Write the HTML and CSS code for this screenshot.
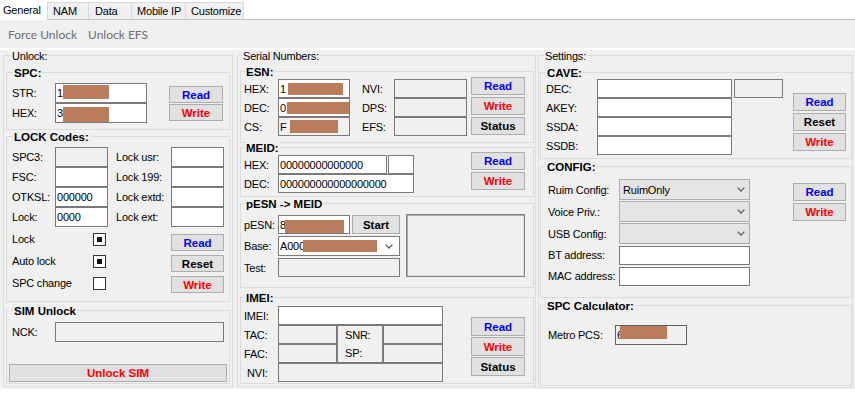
FILE: index.html
```html
<!DOCTYPE html>
<html lang="en">
<head>
    <meta charset="UTF-8">
    <title>General</title>
    <link rel="stylesheet" href="styles.css">
</head>
<body>
    <div class="tabs">
        <div class="tab on">General</div>
        <div class="tab t-nam">NAM</div>
        <div class="tab t-data">Data</div>
        <div class="tab t-mip">Mobile IP</div>
        <div class="tab t-cust">Customize</div>
    </div>
    <div class="menu"><span class="mi">Force Unlock</span><span class="mi">Unlock EFS</span></div>

    <div class="page">
        <!-- left column -->
        <div class="grp col col-left">
            <div class="cap c-unlock">Unlock:</div>

            <div class="grp g-spc">
                <div class="cap b">SPC:</div>
                <div class="body">
                    <div class="form f-spc">
                        <div class="lbl">STR:</div><div class="tb">1<span class="rd rd-str"></span></div>
                        <div class="lbl">HEX:</div><div class="tb">3<span class="rd rd-hex"></span></div>
                    </div>
                    <div class="btns b-spc"><div class="btn blue">Read</div><div class="btn red">Write</div></div>
                </div>
            </div>

            <div class="grp g-lock">
                <div class="cap b">LOCK Codes:</div>
                <div class="form f-lock">
                    <div class="lbl">SPC3:</div><div class="tb off"></div>
                    <div class="lbl in">Lock usr:</div><div class="tb"></div>
                    <div class="lbl">FSC:</div><div class="tb"></div>
                    <div class="lbl in">Lock 199:</div><div class="tb"></div>
                    <div class="lbl">OTKSL:</div><div class="tb">000000</div>
                    <div class="lbl in">Lock extd:</div><div class="tb"></div>
                    <div class="lbl">Lock:</div><div class="tb">0000</div>
                    <div class="lbl in">Lock ext:</div><div class="tb"></div>
                </div>
                <div class="lock-bottom">
                    <div class="checks">
                        <div class="lbl">Lock</div><div class="cb on"></div>
                        <div class="lbl">Auto lock</div><div class="cb on"></div>
                        <div class="lbl">SPC change</div><div class="cb"></div>
                    </div>
                    <div class="btns b-lock">
                        <div class="btn blue">Read</div>
                        <div class="btn">Reset</div>
                        <div class="btn red">Write</div>
                    </div>
                </div>
            </div>

            <div class="grp g-sim">
                <div class="cap b">SIM Unlock</div>
                <div class="form f-sim">
                    <div class="lbl">NCK:</div><div class="tb off"></div>
                </div>
                <div class="btn sim-btn">Unlock SIM</div>
            </div>
        </div>

        <!-- middle column -->
        <div class="grp col col-mid">
            <div class="cap c-serial">Serial Numbers:</div>

            <div class="grp g-esn">
                <div class="cap b">ESN:</div>
                <div class="body">
                    <div class="form f-esn">
                        <div class="lbl">HEX:</div><div class="tb">1<span class="rd rd-esnhex"></span></div>
                        <div class="lbl in12">NVI:</div><div class="tb off"></div>
                        <div class="lbl">DEC:</div><div class="tb">0<span class="rd rd-esndec"></span></div>
                        <div class="lbl in12">DPS:</div><div class="tb off"></div>
                        <div class="lbl">CS:</div><div class="tb off">F<span class="rd rd-cs"></span></div>
                        <div class="lbl in12">EFS:</div><div class="tb off"></div>
                    </div>
                    <div class="btns b-esn">
                        <div class="btn blue">Read</div>
                        <div class="btn red">Write</div>
                        <div class="btn">Status</div>
                    </div>
                </div>
            </div>

            <div class="grp g-meid">
                <div class="cap b">MEID:</div>
                <div class="body">
                    <div class="form f-meid">
                        <div class="lbl">HEX:</div><div class="tb">00000000000000</div><div></div><div class="tb"></div>
                        <div class="lbl">DEC:</div><div class="tb span3">000000000000000000</div>
                    </div>
                    <div class="btns b-meid">
                        <div class="btn blue">Read</div>
                        <div class="btn red">Write</div>
                    </div>
                </div>
            </div>

            <div class="grp g-pesn">
                <div class="cap b">pESN -&gt; MEID</div>
                <div class="body">
                    <div class="form f-pesn">
                        <div class="lbl">pESN:</div><div class="tb">8<span class="rd rd-pesn"></span></div><div></div><div class="btn">Start</div>
                        <div class="lbl">Base:</div>
                        <div class="combo span3">
                            <span>A000<span class="rd rd-base"></span></span>
                            <svg class="chev" width="8" height="5" viewBox="0 0 8 5"><path d="M0.6 0.6 L4 4 L7.4 0.6" fill="none" stroke="#5a5a5a" stroke-width="1.3"/></svg>
                        </div>
                        <div class="lbl">Test:</div><div class="tb off span3"></div>
                    </div>
                    <div class="pic"></div>
                </div>
            </div>

            <div class="grp g-imei">
                <div class="cap b">IMEI:</div>
                <div class="body">
                    <div class="form f-imei">
                        <div class="lbl">IMEI:</div><div class="tb span3"></div>
                        <div class="lbl">TAC:</div><div class="tb off"></div>
                        <div class="snr"><span>SNR:</span><span>SP:</span></div>
                        <div class="tb off"></div>
                        <div class="lbl">FAC:</div><div class="tb off"></div><div class="tb off"></div>
                        <div class="lbl in3">NVI:</div><div class="tb off span3"></div>
                    </div>
                    <div class="btns b-imei">
                        <div class="btn blue">Read</div>
                        <div class="btn red">Write</div>
                        <div class="btn">Status</div>
                    </div>
                </div>
            </div>
        </div>

        <!-- right column -->
        <div class="grp col col-right">
            <div class="cap c-settings">Settings:</div>

            <div class="grp g-cave">
                <div class="cap b">CAVE:</div>
                <div class="body">
                    <div class="form f-cave">
                        <div class="lbl">DEC:</div><div class="tb"></div><div></div><div class="tb off"></div>
                        <div class="lbl">AKEY:</div><div class="tb"></div>
                        <div class="lbl">SSDA:</div><div class="tb"></div>
                        <div class="lbl">SSDB:</div><div class="tb"></div>
                    </div>
                    <div class="btns b-cave">
                        <div class="btn blue">Read</div>
                        <div class="btn">Reset</div>
                        <div class="btn red">Write</div>
                    </div>
                </div>
            </div>

            <div class="grp g-config">
                <div class="cap b">CONFIG:</div>
                <div class="body">
                    <div class="form f-config">
                        <div class="lbl">Ruim Config:</div>
                        <div class="sel"><span>RuimOnly</span><svg class="chev" width="8" height="5" viewBox="0 0 8 5"><path d="M0.6 0.6 L4 4 L7.4 0.6" fill="none" stroke="#5a5a5a" stroke-width="1.3"/></svg></div>
                        <div class="lbl">Voice Priv.:</div>
                        <div class="sel"><span></span><svg class="chev" width="8" height="5" viewBox="0 0 8 5"><path d="M0.6 0.6 L4 4 L7.4 0.6" fill="none" stroke="#5a5a5a" stroke-width="1.3"/></svg></div>
                        <div class="lbl">USB Config:</div>
                        <div class="sel"><span></span><svg class="chev" width="8" height="5" viewBox="0 0 8 5"><path d="M0.6 0.6 L4 4 L7.4 0.6" fill="none" stroke="#5a5a5a" stroke-width="1.3"/></svg></div>
                        <div class="lbl">BT address:</div><div class="tb low"></div>
                        <div class="lbl">MAC address:</div><div class="tb low"></div>
                    </div>
                    <div class="btns b-config">
                        <div class="btn blue">Read</div>
                        <div class="btn red">Write</div>
                    </div>
                </div>
            </div>

            <div class="grp g-calc">
                <div class="cap b">SPC Calculator:</div>
                <div class="body">
                    <div class="form f-calc">
                        <div class="lbl">Metro PCS:</div><div class="tb dark">6<span class="rd rd-metro"></span></div>
                    </div>
                </div>
            </div>
        </div>
    </div>
</body>
</html>
```

FILE: styles.css
```css
*{box-sizing:border-box;}
body{
    margin:0;
    width:855px;
    height:394px;
    overflow:hidden;
    background:#fff;
    font-family:"Liberation Sans",Arial,sans-serif;
    font-size:11px;
    letter-spacing:-0.2px;
    color:#000;
}

/* tab strip */
.tabs{display:flex;align-items:flex-end;height:20px;border-bottom:1px solid #c3c3c3;}
.tab{
    height:17px;
    line-height:16px;
    padding-left:5px;
    border:1px solid #d9d9d9;
    border-right:0;
    border-bottom:0;
    background:#f0f0f0;
    white-space:nowrap;
}
.tab.on{width:47px;height:20px;margin-bottom:-1px;padding:2px 0 0 3px;border:0;background:#fff;}
.t-nam{width:41px;}
.t-data{width:43px;padding-left:6px;}
.t-mip{width:54px;}
.t-cust{width:59px;border-right:1px solid #d9d9d9;}

/* disabled menu */
.menu{
    display:flex;
    height:30px;
    padding:8px 0 0 8px;
    background:#f0f0f0;
    border-bottom:2px solid #fff;
    font-family:Lato,"Open Sans",sans-serif;
    font-size:12px;
    line-height:14px;
    letter-spacing:0;
    color:#6d6d6d;
}
.mi+.mi{margin-left:11px;}

/* page + group boxes */
.page{display:flex;align-items:flex-start;height:339px;background:#f0f0f0;}
.grp{border:1px solid #dcdcdc;}
.cap{
    width:fit-content;
    height:12px;
    line-height:12px;
    margin-top:-6px;
    padding:0 1px;
    background:#f0f0f0;
    white-space:nowrap;
}
.cap.b{font-weight:bold;font-size:11.5px;letter-spacing:0;}
.col{margin-top:5px;}
.col-left{width:230px;height:332px;margin-left:3px;}
.col-mid{width:299px;height:332px;margin-left:4px;}
.col-right{width:315px;height:333px;margin-left:2px;}

/* controls */
.body{display:flex;align-items:flex-start;}
.form{display:grid;}
.lbl{display:flex;align-items:center;white-space:nowrap;}
.lbl.in{padding-left:8px;}
.lbl.in12{padding-left:12px;}
.lbl.in3{padding-left:3px;}
.tb{
    display:flex;
    align-items:center;
    overflow:hidden;
    white-space:nowrap;
    padding-left:1px;
    border:1px solid #7a7a7a;
    background:#fff;
}
.tb.off{background:#f0f0f0;}
.tb.dark{border-color:#5f5f5f;background:#f0f0f0;}
.span3{grid-column:span 3;}
.btns{display:flex;flex-direction:column;}
.btn{
    display:flex;
    align-items:center;
    justify-content:center;
    height:18px;
    border:1px solid #adadad;
    background:#e1e1e1;
    font-weight:bold;
    font-size:11.5px;
    letter-spacing:0;
    white-space:nowrap;
}
.blue{color:#0000ff;}
.red{color:#ff0000;}
.cb{
    display:flex;
    align-items:center;
    justify-content:center;
    width:13px;
    height:13px;
    border:1px solid #333;
    background:#fff;
}
.cb.on::after{content:"";width:5px;height:5px;background:#111;}
.sel{
    display:flex;
    align-items:center;
    justify-content:space-between;
    padding:0 4px 0 3px;
    border:1px solid #acacac;
    background:#e5e5e5;
}
.combo{
    display:flex;
    align-items:center;
    justify-content:space-between;
    padding:0 6px 0 1px;
    border:1px solid #7a7a7a;
    background:#fff;
    white-space:nowrap;
}
.combo>span{display:flex;align-items:center;}
.chev{flex:none;}

/* redacted values */
.rd{display:inline-block;flex:none;background:#ba7d5c;}
.rd-str{width:46px;height:14px;margin-bottom:2px;}
.rd-hex{width:46px;height:15px;margin-top:3px;}
.rd-esnhex{width:55px;height:12px;margin-left:2px;}
.rd-esndec{width:62px;height:12px;margin-left:1px;}
.rd-cs{width:48px;height:13px;margin-left:3px;}
.rd-pesn{width:59px;height:14px;margin:4px 0 0 -1px;}
.rd-base{width:74px;height:12px;margin-left:-2px;}
.rd-metro{width:47px;height:14px;margin:0 0 6px -3px;}

/* left column */
.c-unlock{margin-left:7px;}
.col-left .grp{margin-left:2px;margin-right:2px;}
.col-left .grp .cap{margin-left:6px;}
.g-spc{margin-top:10px;height:58px;}
.g-spc .body{padding:4px 0 0 5px;}
.f-spc{grid-template-columns:43px 92px;grid-auto-rows:20px;}
.b-spc{width:54px;margin:3px 0 0 22px;gap:1px;}
.b-spc .btn{height:17px;}

.g-lock{margin-top:6px;height:166px;}
.f-lock{padding:4px 0 0 5px;grid-template-columns:43px 53px 63px 53px;grid-auto-rows:20px;}
.lock-bottom{display:flex;align-items:flex-start;margin-top:1px;padding-left:5px;}
.checks{display:grid;grid-template-columns:81px 13px;grid-auto-rows:22px;align-items:center;}
.b-lock{width:53px;margin:6px 0 0 65px;gap:4px;}
.b-lock .btn{height:17px;}

.g-sim{margin-top:8px;height:74px;}
.f-sim{padding:5px 0 0 5px;grid-template-columns:43px 169px;grid-auto-rows:20px;}
.sim-btn{width:218px;margin:22px 0 0 2px;color:#f00;}

/* middle column */
.c-serial{margin-left:4px;}
.col-mid .grp{width:294px;margin-left:2px;}
.col-mid .grp .cap{margin-left:4px;}
.col-mid .body{padding-left:3px;}
.g-esn{margin-top:9px;height:72px;}
.f-esn{margin-top:1px;grid-template-columns:34px 72px 44px 73px;grid-auto-rows:19px;}
.b-esn{width:54px;margin:-1px 0 0 4px;gap:2px;}

.g-meid{margin-top:4px;height:50px;}
.f-meid{margin-top:1px;grid-template-columns:34px 109px 1px 26px;grid-auto-rows:19px;}
.b-meid{width:54px;margin:-2px 0 0 57px;gap:2px;}

.g-pesn{margin-top:6px;height:85px;}
.f-pesn{margin-top:5px;grid-template-columns:34px 72px 2px 48px;grid-template-rows:19px 20px 19px;row-gap:2px;}
.f-pesn .btn{height:19px;}
.pic{
    width:119px;
    height:63px;
    margin:4px 0 0 6px;
    border:1px solid #828282;
    box-shadow:inset 1px 1px 0 #a9a9a9, inset -1px -1px 0 #dadada;
}

.g-imei{margin-top:9px;height:87px;}
.f-imei{margin-top:2px;grid-template-columns:34px 59px 46px 60px;grid-auto-rows:19px;}
.snr{
    display:grid;
    grid-row:span 2;
    grid-template-rows:1fr 1fr;
    align-items:center;
    padding-left:7px;
    border:1px solid #7a7a7a;
    background:#f0f0f0;
}
.b-imei{width:54px;margin:13px 0 0 28px;gap:1px;}
.b-imei .btn{height:19px;}

/* right column */
.c-settings{margin-left:5px;}
.col-right .grp{width:312px;margin-left:1px;}
.col-right .grp .cap{margin-left:5px;}
.g-cave{margin-top:10px;height:87px;}
.g-cave .body{padding-left:5px;}
.f-cave{grid-template-columns:51px 135px 2px 49px;grid-auto-rows:19px;}
.f-cave .lbl{grid-column:1;}
.b-cave{width:53px;margin:14px 0 0 10px;gap:2px;}

.g-config{margin-top:7px;height:132px;}
.g-config .body{padding-left:7px;}
.f-config{margin-top:6px;grid-template-columns:71px 131px;grid-template-rows:21px 21px 21px 20px 20px;row-gap:1px;}
.tb.low{height:19px;align-self:end;}
.b-config{width:53px;margin:10px 0 0 43px;gap:2px;}

.g-calc{margin-top:7px;height:81px;}
.g-calc .body{padding:13px 0 0 7px;}
.f-calc{grid-template-columns:67px 72px;grid-auto-rows:20px;}
```
